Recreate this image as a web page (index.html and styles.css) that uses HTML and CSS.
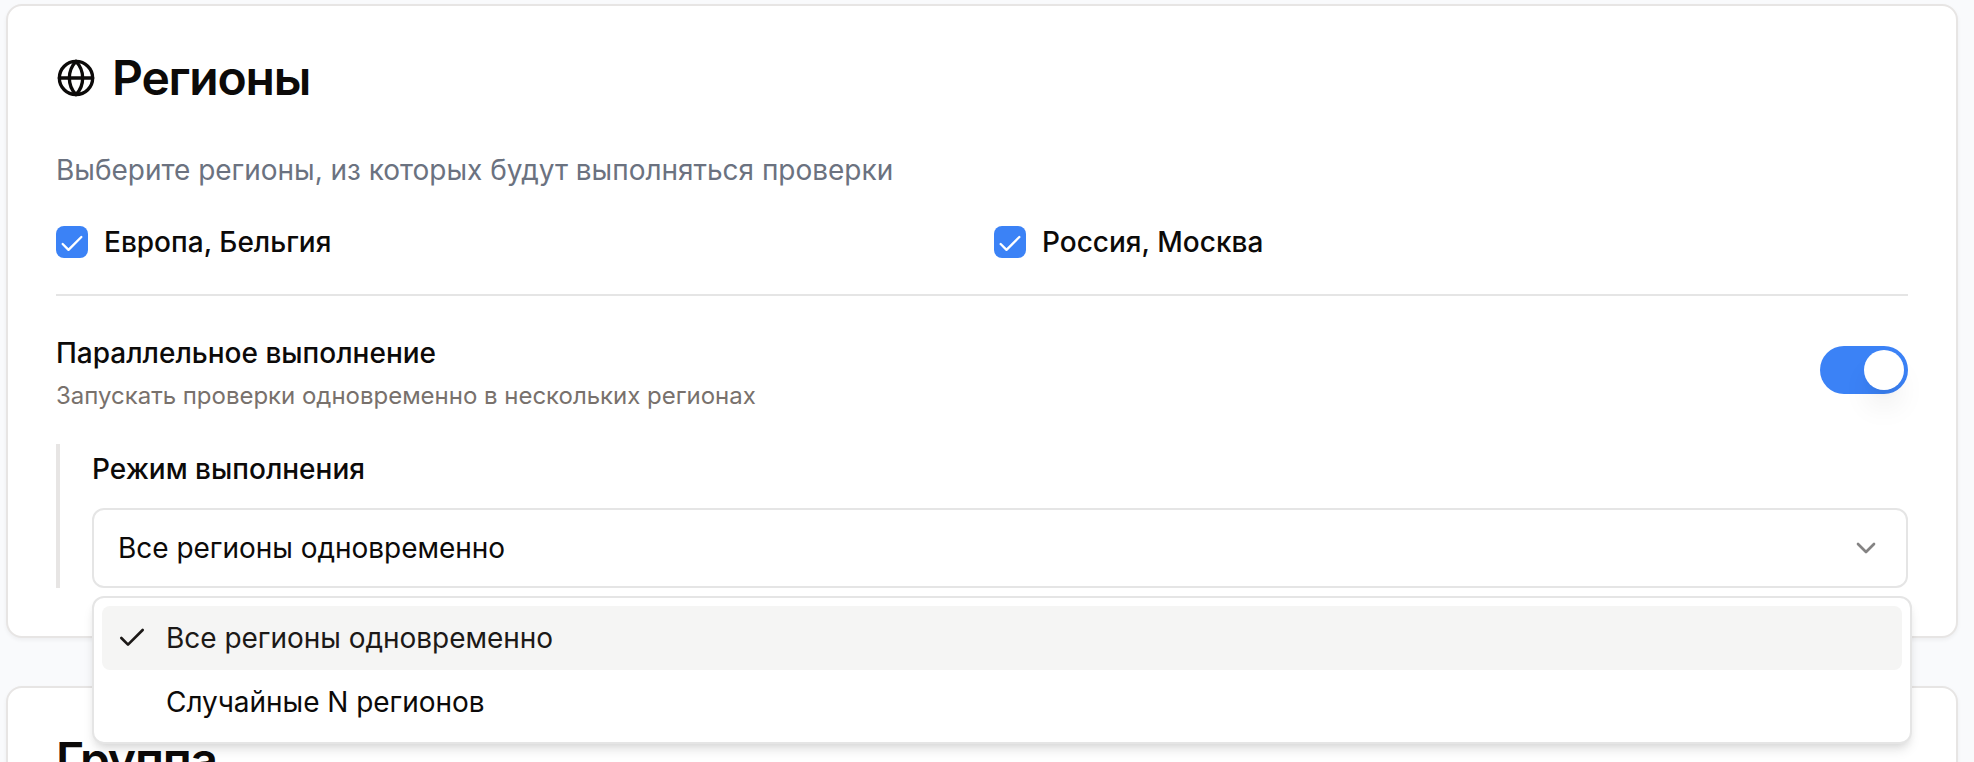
FILE: index.html
```html
<!DOCTYPE html>
<html lang="ru">
<head>
<meta charset="utf-8">
<title>Регионы</title>
<link rel="stylesheet" href="styles.css">
</head>
<body>
<div class="page">
    <div class="card">
        <h3 class="card-title">
            <svg class="icon-globe" viewBox="0 0 24 24"><circle cx="12" cy="12" r="10"/><path d="M12 2a14.5 14.5 0 0 0 0 20 14.5 14.5 0 0 0 0-20"/><path d="M2 12h20"/></svg>
            <span>Регионы</span>
        </h3>
        <p class="hint">Выберите регионы, из которых будут выполняться проверки</p>
        <div class="regions">
            <label class="region">
                <span class="checkbox"><svg viewBox="0 0 24 24"><path d="M20 6 9 17l-5-5"/></svg></span>
                <span>Европа, Бельгия</span>
            </label>
            <label class="region">
                <span class="checkbox"><svg viewBox="0 0 24 24"><path d="M20 6 9 17l-5-5"/></svg></span>
                <span>Россия, Москва</span>
            </label>
        </div>
        <div class="parallel">
            <div>
                <div class="label">Параллельное выполнение</div>
                <p class="note">Запускать проверки одновременно в нескольких регионах</p>
            </div>
            <div class="switch"><span class="thumb"></span></div>
        </div>
        <div class="mode">
            <div class="label">Режим выполнения</div>
            <div class="select">
                <span>Все регионы одновременно</span>
                <svg class="icon-chevron" viewBox="0 0 24 24"><path d="m6 9 6 6 6-6"/></svg>
                <ul class="menu">
                    <li class="active">
                        <span class="mark"><svg viewBox="0 0 24 24"><path d="M20 6 9 17l-5-5"/></svg></span>
                        <span>Все регионы одновременно</span>
                    </li>
                    <li>
                        <span class="mark"></span>
                        <span>Случайные N регионов</span>
                    </li>
                </ul>
            </div>
        </div>
    </div>
    <!--/regions-->
    <div class="card">
        <h3 class="card-title"><span>Группа</span></h3>
    </div>
    <!--/group-->
</div>
</body>
</html>
```

FILE: styles.css
```css
*{box-sizing:border-box;}
body,h3,p,ul,li{margin:0;padding:0;}
html{height:762px;overflow:hidden;}
body{height:762px;overflow:hidden;background:#f9fafc;color:#0c0a09;font:28px/40px Inter,sans-serif;}
li{list-style:none;}
svg{display:block;flex:none;fill:none;stroke:currentColor;stroke-width:2;stroke-linecap:round;stroke-linejoin:round;}

.page{display:flex;flex-direction:column;gap:48px;height:762px;overflow:hidden;padding:4px 16px 0 6px;}
.card{flex:none;padding:48px;background:#fff;border:2px solid #e7e5e4;border-radius:16px;box-shadow:0 2px 4px rgba(0,0,0,.05);}
.card-title{display:flex;align-items:center;gap:16px;margin-bottom:48px;font-size:48px;font-weight:600;line-height:48px;letter-spacing:-1.2px;}
.icon-globe{width:40px;height:40px;}
.hint{color:#6b7280;letter-spacing:-.02px;}

.regions{display:grid;grid-template-columns:1fr 1fr;gap:24px;margin-top:32px;}
.region{display:flex;align-items:center;gap:16px;font-weight:500;}
.checkbox{width:32px;height:32px;padding:4px 2px 0;border-radius:8px;background:#3b82f6;color:#fff;}
.checkbox svg{width:28px;height:28px;}

.parallel{display:flex;align-items:center;justify-content:space-between;margin-top:32px;padding-top:32px;border-top:2px solid #e5e5e5;}
.label{font-weight:500;line-height:50px;}
.note{margin-top:2px;color:#78716c;font-size:24px;line-height:32px;letter-spacing:-.02px;}
.switch{display:flex;justify-content:flex-end;width:88px;height:48px;padding:4px;border-radius:24px;background:#3b82f6;}
.thumb{width:40px;height:40px;border-radius:50%;background:#fff;box-shadow:0 20px 30px -6px rgba(0,0,0,.1),0 8px 12px -8px rgba(0,0,0,.1);}

.mode{margin-top:32px;padding-left:32px;border-left:4px solid #e7e5e4;}
.select{position:relative;display:flex;align-items:center;justify-content:space-between;height:80px;margin-top:14px;padding:0 24px;border:2px solid #e5e5e5;border-radius:12px;letter-spacing:-.03px;}
.icon-chevron{width:32px;height:32px;opacity:.5;}

/* open list, hangs 8px below the select */
.menu{position:absolute;top:86px;left:-2px;z-index:10;width:1820px;padding:8px;background:#fff;border:2px solid #e5e5e5;border-radius:12px;box-shadow:0 8px 12px -2px rgba(0,0,0,.1),0 4px 8px -4px rgba(0,0,0,.1);}
.menu li{display:flex;align-items:center;gap:20px;height:64px;padding:0 16px;border-radius:8px;}
.menu .active{background:#f5f5f4;color:#1c1917;}
.mark{display:flex;justify-content:center;width:28px;}
.mark svg{width:32px;height:32px;}
```
